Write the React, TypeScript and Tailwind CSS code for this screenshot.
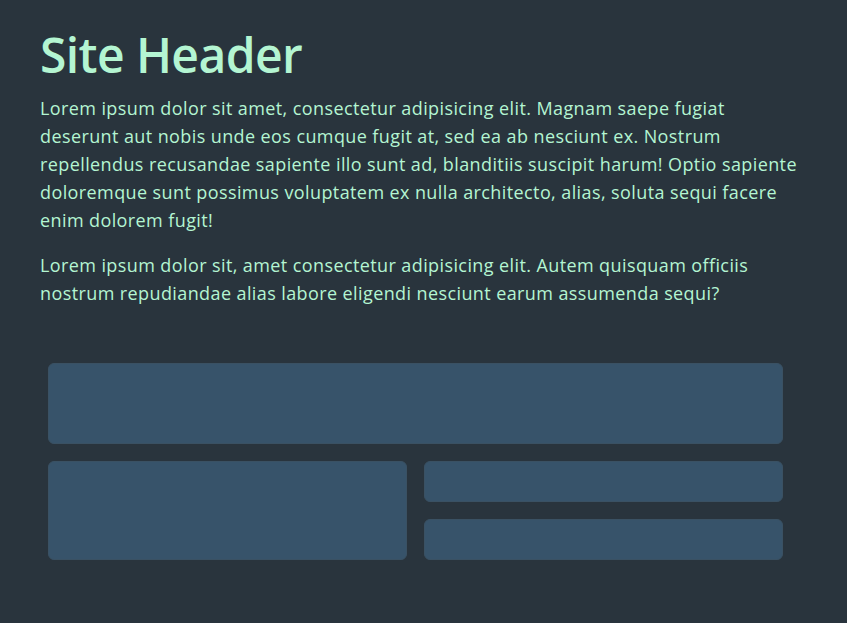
export default function App() {
  return (
    <div className="min-h-[623px] bg-[#29343d] text-[#b4f5d2] font-['Open_Sans',sans-serif]">
      <header className="px-10 pt-[23px]">
        <h1 className="text-[48px] leading-[64px] font-semibold tracking-[-0.6px]">Site Header</h1>
        <p className="mt-[7px] text-[18px] leading-7 tracking-[0.4px]">
          Lorem ipsum dolor sit amet, consectetur adipisicing elit. Magnam saepe fugiat deserunt aut nobis unde eos cumque fugit at, sed ea ab nesciunt ex. Nostrum repellendus recusandae sapiente illo sunt ad, blanditiis suscipit harum! Optio sapiente doloremque sunt possimus voluptatem ex nulla architecto, alias, soluta sequi facere enim dolorem fugit!
        </p>
        <p className="mt-[17px] text-[18px] leading-7 tracking-[0.4px]">
          Lorem ipsum dolor sit, amet consectetur adipisicing elit. Autem quisquam officiis nostrum repudiandae alias labore eligendi nesciunt earum assumenda sequi?
        </p>
      </header>

      <section className="ml-12 mr-16 mt-[56px] grid grid-cols-2 gap-[17px]">
        <div className="col-span-2 h-[81px] rounded-md border border-[#3a5163] bg-[#37536a]" />
        <div className="row-span-2 h-[99px] rounded-md border border-[#3a5163] bg-[#37536a]" />
        <div className="flex flex-col gap-[17px]">
          <div className="h-[41px] rounded-md border border-[#3a5163] bg-[#37536a]" />
          <div className="h-[41px] rounded-md border border-[#3a5163] bg-[#37536a]" />
        </div>
      </section>
    </div>
  );
}
